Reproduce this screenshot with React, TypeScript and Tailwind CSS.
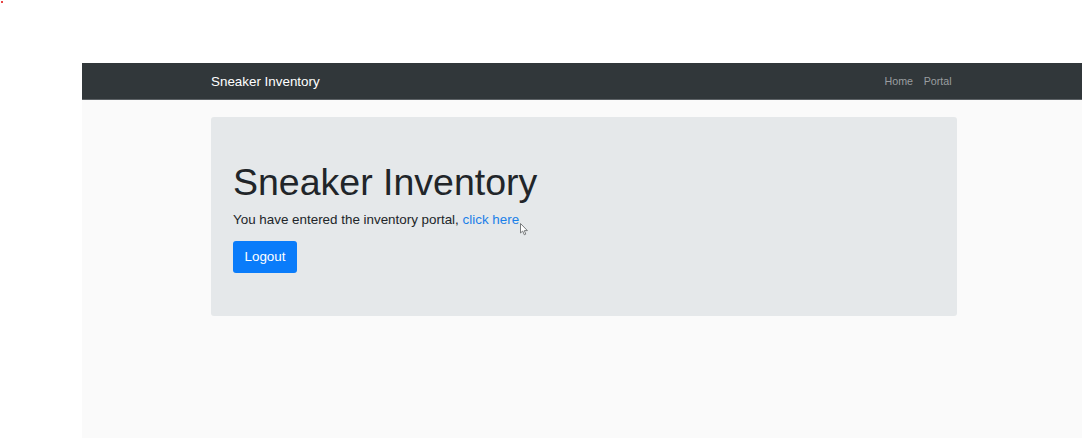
import React from "react";

export default function App() {
  return (
    <div
      className="relative w-[1082px] h-[438px] bg-white pt-[63px] pl-[82px] overflow-hidden"
      style={{ fontFamily: '"Liberation Sans", Arial, Helvetica, sans-serif' }}
    >
      <div className="absolute left-[1px] top-[1px] w-[2px] h-[2px] bg-[#e84545]" />
      <div className="flex flex-col h-full bg-[#fafafa]">
        <nav className="h-[37px] bg-[#31373a] border-b border-[#5d6266]">
          <div className="w-[746px] ml-[129px] h-full flex items-center justify-between">
            <a className="text-[13.4px] leading-[20px] text-white pt-[1px]">Sneaker Inventory</a>
            <div className="flex items-center text-[10.7px] leading-[16px] text-[#9a9ea0]">
              <a className="px-[5.35px]">Home</a>
              <a className="px-[5.35px]">Portal</a>
            </div>
          </div>
        </nav>
        <div className="mt-[17px] w-[746px] ml-[129px] h-[199px] bg-[#e5e8ea] rounded-[3px] px-[22px] pt-[43px]">
          <h1 className="text-[37.5px] leading-[45px] font-light text-[#212529] mb-[5.4px]">
            Sneaker Inventory
          </h1>
          <p className="relative text-[13.4px] leading-[20px] text-[#212529] mb-[10.7px]">
            You have entered the inventory portal,{" "}
            <a className="text-[#1a7fe8]">click here</a>
            <svg
              className="absolute left-[287px] top-[13px]"
              width="9"
              height="13"
              viewBox="0 0 9 13"
            >
              <path
                d="M0.5 0.5 L0.5 10 L2.7 8 L4.3 11.8 L5.8 11.1 L4.3 7.6 L7.4 7.6 Z"
                fill="#ffffff"
                stroke="#6b6e70"
                strokeWidth="0.9"
                strokeLinejoin="round"
              />
            </svg>
          </p>
          <button className="h-[32px] w-[64px] rounded-[3px] bg-[#0a7cfa] text-white text-[13.4px] leading-[20px]">
            Logout
          </button>
        </div>
      </div>
    </div>
  );
}
